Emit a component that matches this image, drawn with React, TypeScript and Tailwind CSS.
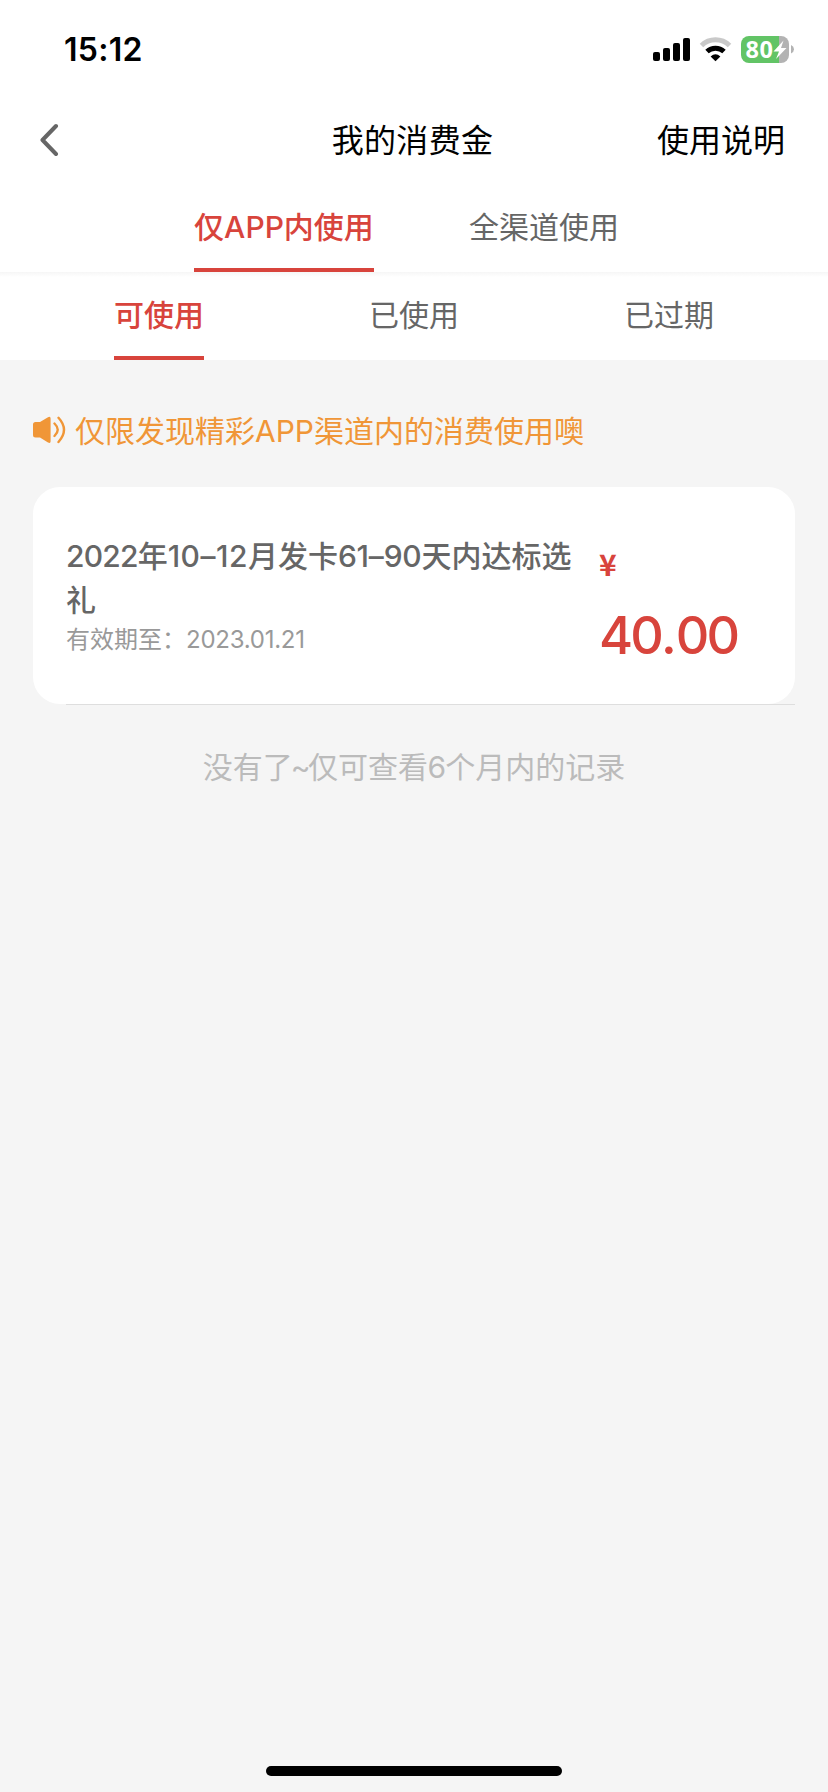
import React from "react";

const FONT = "font-['Inter','Noto_Sans_CJK_SC',sans-serif]";

function StatusBar() {
  return (
    <div className="flex h-[100px] items-start justify-between pl-[64px] pr-[33px]">
      <div className="mt-[30px] text-[32px] font-semibold leading-[40px] tracking-[0.3px] text-black">15:12</div>
      <svg className="mt-[34px]" width="143" height="32" viewBox="652 34 143 32">
        <g fill="#000">
          <rect x="653" y="52" width="7" height="9" rx="2" />
          <rect x="663" y="48" width="7" height="13" rx="2" />
          <rect x="673" y="43" width="7" height="18" rx="2" />
          <rect x="683" y="38" width="7" height="23" rx="2" />
        </g>
        <path d="M701.5 45.5 A20 20 0 0 1 729.5 45.5" fill="none" stroke="#c9c9c9" strokeWidth="5" />
        <path d="M707 51.5 A12.6 12.6 0 0 1 724 51.5" fill="none" stroke="#000" strokeWidth="5" />
        <path d="M710.6 56.4 Q715.5 52 720.4 56.4 L715.5 61.2 Z" fill="#000" />
        <path d="M749 36 H779 V63 H749 A8 8 0 0 1 741 55 V44 A8 8 0 0 1 749 36 Z" fill="#62c466" />
        <path d="M779 36 H781 A8 8 0 0 1 789 44 V55 A8 8 0 0 1 781 63 H779 Z" fill="#b3b3b3" />
        <path d="M791 45 Q794 46.5 794 49.2 Q794 52 791 53.5 Z" fill="#b3b3b3" />
        <text x="745.5" y="57.5" fontSize="23.5" fontWeight="700" fill="#fff" textLength="27.5" fontFamily="Open Sans, sans-serif">80</text>
        <path d="M783.5 40.5 L773.5 51.5 H779 L776 59 L786.5 48 H781 Z" fill="#fff" />
      </svg>
    </div>
  );
}

function NavBar() {
  return (
    <div className="grid h-[80px] grid-cols-[1fr_auto_1fr] items-center pl-[40px] pr-[43px] text-[32px] text-black">
      <svg width="20" height="34" viewBox="0 0 20 34">
        <path d="M16 3 L2.5 17 L16 31" fill="none" stroke="#666" strokeWidth="4" strokeLinecap="round" strokeLinejoin="round" />
      </svg>
      <div className="pt-[2px] tracking-[0.3px]">我的消费金</div>
      <div className="pt-[2px] text-right">使用说明</div>
    </div>
  );
}

function Tab({ label, active, tall }: { label: string; active?: boolean; tall?: boolean }) {
  return (
    <div className="flex justify-center">
      <div
        className={
          "whitespace-nowrap border-b-4 text-[30px] leading-[44px] " +
          (tall ? "h-[92px] pt-[25px] " : "h-[88px] pt-[21px] ") +
          (active ? "border-[#d8443c] font-medium text-[#d8443c]" : "border-transparent text-[#666]")
        }
      >
        {label}
      </div>
    </div>
  );
}

export default function App() {
  return (
    <div className={"flex h-[1792px] w-[828px] flex-col bg-[#f5f5f5] " + FONT}>
      <header className="bg-white">
        <StatusBar />
        <NavBar />
        <div className="grid grid-cols-2 px-[154px]">
          <Tab label="仅APP内使用" active tall />
          <Tab label="全渠道使用" tall />
        </div>
        <div className="grid grid-cols-3 bg-gradient-to-b from-[#f6f6f6] to-white to-[5px] px-[31.5px]">
          <Tab label="可使用" active />
          <Tab label="已使用" />
          <Tab label="已过期" />
        </div>
      </header>

      <main className="flex-1 pl-[33px] pr-[33px]">
        <div className="flex h-[127px] items-center pt-[13px] text-[30px] text-[#f09637]">
          <svg className="mr-[9px]" width="33" height="28" viewBox="0 0 33 28">
            <path d="M2.5 6 H7 L15 1.2 Q17.6 0 17.6 2.5 V25.3 Q17.6 28 15 26.6 L7 21.5 H2.5 Q0 21.5 0 19 V8.5 Q0 6 2.5 6 Z" fill="#f09637" />
            <path d="M21.5 7.5 Q28 13.8 21.5 20 M25.5 1.8 Q36.5 13.8 25.5 26" fill="none" stroke="#f09637" strokeWidth="2.4" strokeLinecap="round" />
          </svg>
          <span className="pt-[2px]">仅限发现精彩APP渠道内的消费使用噢</span>
        </div>

        <section className="flex h-[217px] rounded-[27px] bg-white pl-[33px]">
          <div className="w-[533px] pt-[47px]">
            <div className="text-[30px] font-medium leading-[44px] text-[#666]">
              <div className="whitespace-nowrap">
                <span className="tracking-[-0.8px]">2022</span>年<span className="tracking-[0.5px]">10–12</span>月发卡<span className="tracking-[-0.2px]">61–90</span>天内达标选
              </div>
              <div>礼</div>
            </div>
            <div className="text-[24px] leading-[36px] text-[#999]">
              有效期至：<span className="tracking-[-0.25px]">2023.01.21</span>
            </div>
          </div>
          <div className="text-[#d8443c]">
            <div className="mt-[56px] text-[30px] font-bold leading-[40px] font-['Noto_Sans_CJK_SC',sans-serif]">¥</div>
            <div className="mt-[21px] text-[52px] font-medium leading-[64px] tracking-[-2.8px]">
              40<span className="tracking-[-1.2px]">.</span>00
            </div>
          </div>
        </section>
        <div className="ml-[33px] h-px bg-[#dedede]" />
        <p className="mt-[40px] text-center text-[30px] leading-[44px] text-[#bbb]">
          没有了<span className="ml-[-2px] tracking-[-2.5px]">~</span>仅可查看<span className="ml-[-0.5px] tracking-[-0.8px]">6</span>个月内的记录
        </p>
      </main>

      <footer className="flex h-[26px] justify-center">
        <div className="h-[10px] w-[296px] rounded-full bg-black" />
      </footer>
    </div>
  );
}
